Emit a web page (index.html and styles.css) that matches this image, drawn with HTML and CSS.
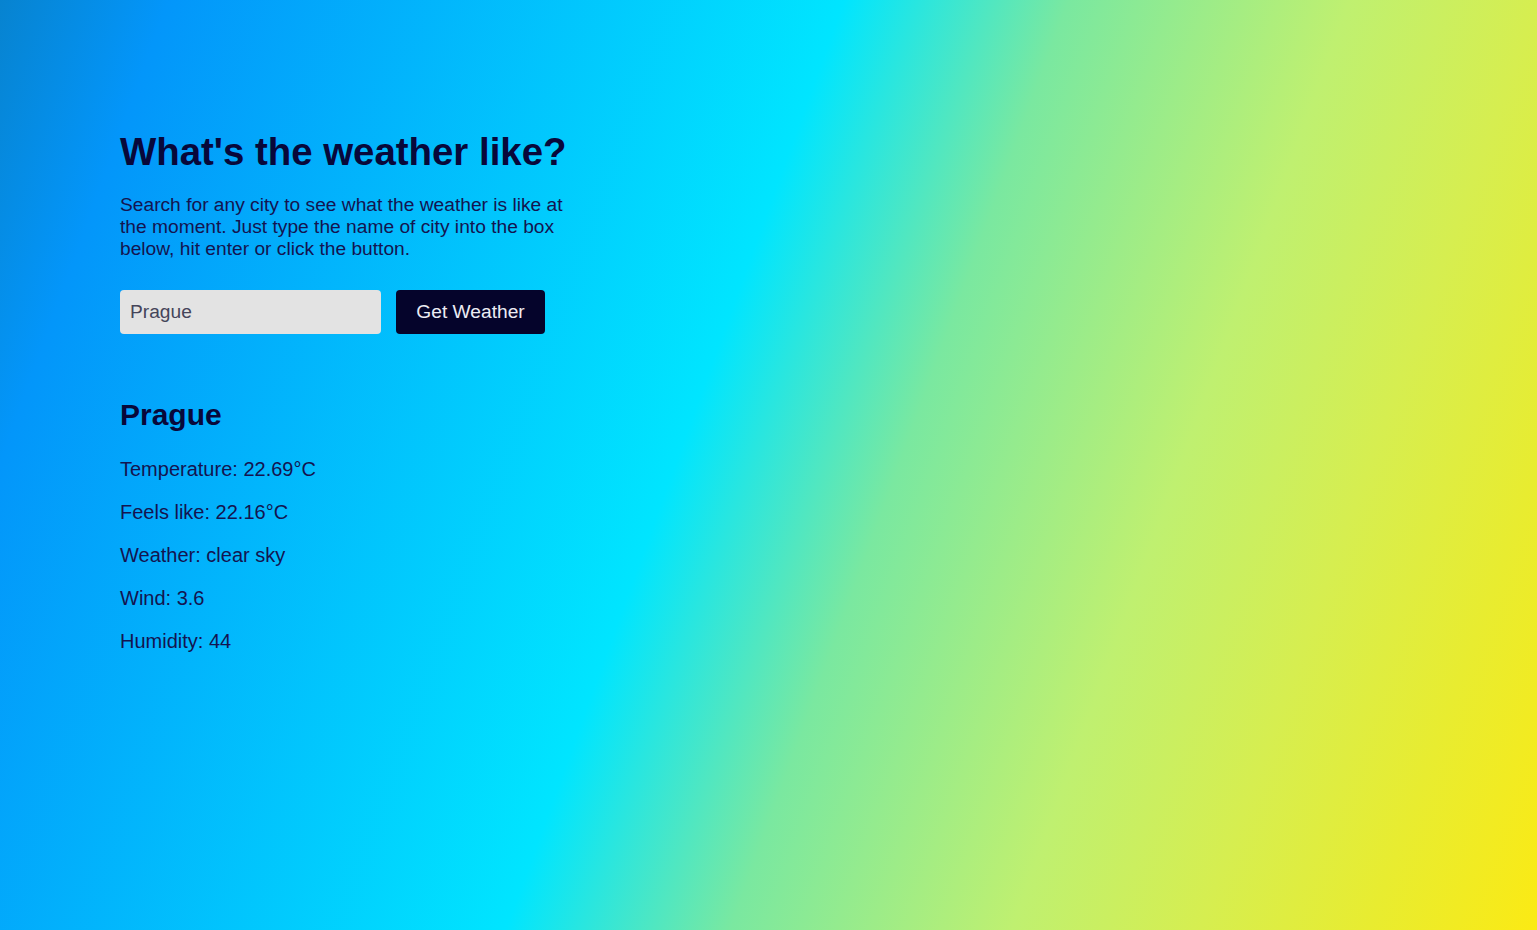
FILE: index.html
```html
<!DOCTYPE html>
<html lang="en">
<head>
<meta charset="utf-8">
<title>Weather</title>
<link rel="stylesheet" href="styles.css">
</head>
<body>
<main class="app">
  <h1 class="title">What's the weather like?</h1>
  <p class="intro">Search for any city to see what the weather is like at the moment. Just type the name of city into the box below, hit enter or click the button.</p>
  <form class="search">
    <input class="search-input" type="text" value="Prague">
    <button class="search-btn" type="button">Get Weather</button>
  </form>
  <section class="result">
    <h2 class="city">Prague</h2>
    <p class="row">Temperature: 22.69°C</p>
    <p class="row">Feels like: 22.16°C</p>
    <p class="row">Weather: clear sky</p>
    <p class="row">Wind: 3.6</p>
    <p class="row">Humidity: 44</p>
  </section>
</main>
</body>
</html>
```

FILE: styles.css
```css
html, body {
  margin: 0;
  height: 100%;
}
body {
  font-family: "Liberation Sans", Arial, sans-serif;
  color: #0b0b3b;
  background: linear-gradient(110deg, #0783d0 0%, #0396fa 9%, #00e5ff 45%, #7ae8a0 57%, #bff070 72%, #d6ee50 82%, #e8ec30 91%, #fbea14 100%);
  min-height: 930px;
}
.app {
  padding: 110px 0 0 120px;
  max-width: 455px;
}
.title {
  font-size: 38.4px;
  font-weight: 700;
  margin: 19px 0 0;
  line-height: 46px;
  color: #08083a;
}
.intro {
  font-size: 19.2px;
  line-height: 22px;
  margin: 19px 0 0;
  color: #141450;
}
.search {
  display: flex;
  gap: 15px;
  margin-top: 30px;
}
.search-input {
  width: 261px;
  height: 44px;
  box-sizing: border-box;
  border: none;
  border-radius: 4px;
  background: #e3e3e3;
  padding: 0 10px;
  font: 19.2px "Liberation Sans", Arial, sans-serif;
  color: #45455a;
}
.search-btn {
  height: 44px;
  width: 149px;
  border: none;
  border-radius: 4px;
  background: #05042b;
  color: #ececf4;
  font: 19.2px "Liberation Sans", Arial, sans-serif;
}
.result {
  margin-top: 64px;
}
.city {
  font-size: 30px;
  font-weight: 700;
  margin: 0 0 26px;
  line-height: 34px;
  color: #08083a;
}
.row {
  font-size: 20px;
  line-height: 23px;
  margin: 20px 0 0;
  color: #141450;
}
.city + .row {
  margin-top: 0;
}
```
